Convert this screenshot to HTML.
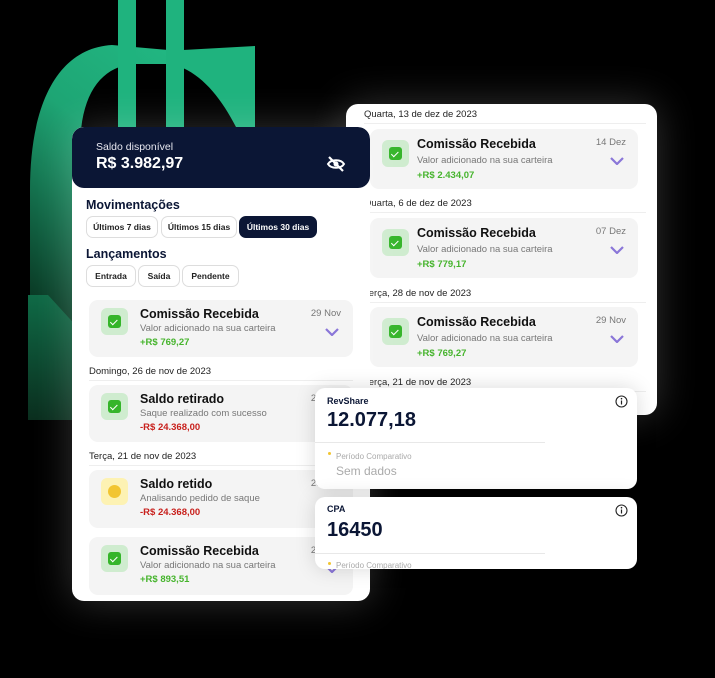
<!DOCTYPE html>
<html><head><meta charset="utf-8">
<style>
*{margin:0;padding:0;box-sizing:border-box}
body{width:715px;height:678px;background:#000;position:relative;overflow:hidden;font-family:"Liberation Sans",sans-serif}
.a{position:absolute}
.panel{background:#fff;border-radius:12px;box-shadow:0 0 40px rgba(255,255,255,0.2)}
.row{position:absolute;background:#f4f4f4;border-radius:9px}
.ic{position:absolute;left:12px;top:8px;width:27px;height:27px;border-radius:6px;background:#cfeccf}
.ic i{position:absolute;left:7px;top:7px;width:13px;height:13px;border-radius:3px;background:#35b52a}
.ic i:after{content:"";position:absolute;left:4px;top:2.5px;width:3px;height:5.5px;border:solid #fff;border-width:0 1.5px 1.5px 0;transform:rotate(45deg)}
.ic.y{background:#fdf2b3}.ic.y i{background:#f2c531;border-radius:50%}.ic.y i:after{display:none}
.t{position:absolute;left:51px;top:7px;font-size:12.5px;font-weight:bold;color:#111}
.s{position:absolute;left:51px;top:23px;font-size:9.5px;color:#777}
.m{position:absolute;left:51px;top:37px;font-size:9.5px;font-weight:bold;color:#46b42d}
.m.r{color:#c8201c}
.d{position:absolute;right:12px;top:8px;font-size:9.5px;color:#777}
.ch{position:absolute;right:14px;top:28px;width:14px;height:8px}
.date{position:absolute;font-size:9.5px;color:#222;border-bottom:1px solid #eee;padding-bottom:3px}
.btn{position:absolute;height:22px;border:1px solid #ddd;border-radius:7px;font-size:8.5px;font-weight:bold;color:#222;text-align:center;line-height:20px}
</style></head><body>

<svg class="a" style="left:0;top:0" width="380" height="420">
<defs><linearGradient id="g" x1="0.8" y1="0" x2="0.2" y2="1"><stop offset="0" stop-color="#22bb85"/><stop offset="0.45" stop-color="#1ea574"/><stop offset="1" stop-color="#0a3a25"/></linearGradient>
<linearGradient id="g2" x1="0" y1="0" x2="0" y2="1"><stop offset="0" stop-color="#0f6a46"/><stop offset="1" stop-color="#0a2e1e"/></linearGradient></defs>
<path d="M255 46 L225 55 L112 45 C60 48 30 100 30 190 L30 300 L80 330 L80 150 C80 95 100 68 132 64 L255 64 Z" fill="url(#g)"/>
<path d="M183 50 L255 46 L255 127 L236 127 C222 100 205 78 183 68 Z" fill="#1fb37e"/>
<rect x="118" y="0" width="18" height="130" fill="#1fb37e"/>
<rect x="166" y="0" width="18" height="130" fill="#1fb37e"/>
<path d="M28 295 L48 295 L80 330 L80 420 L28 420 Z" fill="url(#g2)"/>
</svg>

<!-- right panel -->
<div class="a panel" style="left:346px;top:104px;width:311px;height:311px;overflow:hidden">
 <div class="date" style="left:18px;top:5px;width:282px">Quarta, 13 de dez de 2023</div>
 <div class="row" style="left:24px;top:25px;width:268px;height:60px"><div class="ic" style="top:11px"><i></i></div><div class="t" style="left:47px;top:8px">Comissão Recebida</div><div class="s" style="left:47px;top:26px">Valor adicionado na sua carteira</div><div class="m" style="left:47px;top:41px">+R$ 2.434,07</div><div class="d">14 Dez</div><svg class="ch" viewBox="0 0 14 8"><path d="M1 1 L7 7 L13 1" stroke="#8a76d8" stroke-width="2.2" fill="none"/></svg></div>
 <div class="date" style="left:18px;top:94px;width:282px">Quarta, 6 de dez de 2023</div>
 <div class="row" style="left:24px;top:114px;width:268px;height:60px"><div class="ic" style="top:11px"><i></i></div><div class="t" style="left:47px;top:8px">Comissão Recebida</div><div class="s" style="left:47px;top:26px">Valor adicionado na sua carteira</div><div class="m" style="left:47px;top:41px">+R$ 779,17</div><div class="d">07 Dez</div><svg class="ch" viewBox="0 0 14 8"><path d="M1 1 L7 7 L13 1" stroke="#8a76d8" stroke-width="2.2" fill="none"/></svg></div>
 <div class="date" style="left:18px;top:184px;width:282px">Terça, 28 de nov de 2023</div>
 <div class="row" style="left:24px;top:203px;width:268px;height:60px"><div class="ic" style="top:11px"><i></i></div><div class="t" style="left:47px;top:8px">Comissão Recebida</div><div class="s" style="left:47px;top:26px">Valor adicionado na sua carteira</div><div class="m" style="left:47px;top:41px">+R$ 769,27</div><div class="d">29 Nov</div><svg class="ch" viewBox="0 0 14 8"><path d="M1 1 L7 7 L13 1" stroke="#8a76d8" stroke-width="2.2" fill="none"/></svg></div>
 <div class="date" style="left:18px;top:273px;width:282px">Terça, 21 de nov de 2023</div>
</div>

<!-- left panel -->
<div class="a panel" style="left:72px;top:127px;width:298px;height:474px;overflow:hidden">
 <div class="a" style="left:0;top:0;width:298px;height:61px;background:#0b1635;border-radius:12px">
  <div class="a" style="left:24px;top:14px;font-size:10.5px;color:#e8e8f0">Saldo disponível</div>
  <div class="a" style="left:24px;top:28px;font-size:16px;font-weight:bold;color:#fff">R$ 3.982,97</div>
  <svg class="a" style="left:254px;top:29px" width="20" height="16" viewBox="0 0 20 16"><path d="M2 8 C5 3 15 3 18 8 C15 13 5 13 2 8Z" stroke="#fff" stroke-width="2" fill="none"/><circle cx="10" cy="8" r="2.5" fill="#fff"/><path d="M3 1 L17 15" stroke="#fff" stroke-width="2.2"/></svg>
 </div>
 <div class="a" style="left:14px;top:71px;font-size:12.5px;font-weight:bold;color:#0b1635">Movimentações</div>
 <div class="btn" style="left:14px;top:89px;width:72px">Últimos 7 dias</div>
 <div class="btn" style="left:89px;top:89px;width:76px">Últimos 15 dias</div>
 <div class="btn" style="left:167px;top:89px;width:78px;background:#0b1635;color:#fff;border-color:#0b1635">Últimos 30 dias</div>
 <div class="a" style="left:14px;top:120px;font-size:12.5px;font-weight:bold;color:#0b1635">Lançamentos</div>
 <div class="btn" style="left:14px;top:138px;width:50px">Entrada</div>
 <div class="btn" style="left:66px;top:138px;width:42px">Saída</div>
 <div class="btn" style="left:110px;top:138px;width:57px">Pendente</div>

 <div class="row" style="left:17px;top:173px;width:264px;height:57px"><div class="ic"><i></i></div><div class="t">Comissão Recebida</div><div class="s">Valor adicionado na sua carteira</div><div class="m">+R$ 769,27</div><div class="d">29 Nov</div><svg class="ch" viewBox="0 0 14 8"><path d="M1 1 L7 7 L13 1" stroke="#8a76d8" stroke-width="2.2" fill="none"/></svg></div>
 <div class="date" style="left:17px;top:239px;width:264px">Domingo, 26 de nov de 2023</div>
 <div class="row" style="left:17px;top:258px;width:264px;height:57px"><div class="ic"><i></i></div><div class="t">Saldo retirado</div><div class="s">Saque realizado com sucesso</div><div class="m r">-R$ 24.368,00</div><div class="d">29 Nov</div></div>
 <div class="date" style="left:17px;top:324px;width:264px">Terça, 21 de nov de 2023</div>
 <div class="row" style="left:17px;top:343px;width:264px;height:58px"><div class="ic y"><i></i></div><div class="t">Saldo retido</div><div class="s">Analisando pedido de saque</div><div class="m r">-R$ 24.368,00</div><div class="d">29 Nov</div></div>
 <div class="row" style="left:17px;top:410px;width:264px;height:58px"><div class="ic"><i></i></div><div class="t">Comissão Recebida</div><div class="s">Valor adicionado na sua carteira</div><div class="m">+R$ 893,51</div><div class="d">29 Nov</div><svg class="ch" viewBox="0 0 14 8"><path d="M1 1 L7 7 L13 1" stroke="#8a76d8" stroke-width="2.2" fill="none"/></svg></div>
</div>

<!-- RevShare -->
<div class="a" style="left:315px;top:388px;width:322px;height:101px;background:#fff;border-radius:10px;box-shadow:0 0 20px rgba(0,0,0,0.15);overflow:hidden">
 <div class="a" style="left:12px;top:8px;font-size:9px;font-weight:bold;color:#0b1635">RevShare</div>
 <svg class="a" style="left:300px;top:7px" width="13" height="13" viewBox="0 0 13 13"><circle cx="6.5" cy="6.5" r="5.5" stroke="#222" stroke-width="1.1" fill="none"/><path d="M6.5 5.5 V9.5" stroke="#222" stroke-width="1.2"/><circle cx="6.5" cy="3.7" r="0.8" fill="#222"/></svg>
 <div class="a" style="left:12px;top:21px;font-size:20px;font-weight:bold;color:#0b1635">12.077,18</div>
 <div class="a" style="left:0;top:54px;width:230px;border-top:1px solid #e8e8e8"></div>
 <div class="a" style="left:13px;top:64px;width:3px;height:3px;border-radius:50%;background:#f2c531"></div>
 <div class="a" style="left:21px;top:64px;font-size:8px;color:#aaa">Período Comparativo</div>
 <div class="a" style="left:21px;top:76px;font-size:12px;color:#aaa">Sem dados</div>
</div>

<!-- CPA -->
<div class="a" style="left:315px;top:497px;width:322px;height:72px;background:#fff;border-radius:10px;box-shadow:0 0 20px rgba(0,0,0,0.15);overflow:hidden">
 <div class="a" style="left:12px;top:7px;font-size:9px;font-weight:bold;color:#0b1635">CPA</div>
 <svg class="a" style="left:300px;top:7px" width="13" height="13" viewBox="0 0 13 13"><circle cx="6.5" cy="6.5" r="5.5" stroke="#222" stroke-width="1.1" fill="none"/><path d="M6.5 5.5 V9.5" stroke="#222" stroke-width="1.2"/><circle cx="6.5" cy="3.7" r="0.8" fill="#222"/></svg>
 <div class="a" style="left:12px;top:22px;font-size:20px;font-weight:bold;color:#0b1635">16450</div>
 <div class="a" style="left:0;top:56px;width:230px;border-top:1px solid #e8e8e8"></div>
 <div class="a" style="left:13px;top:65px;width:3px;height:3px;border-radius:50%;background:#f2c531"></div>
 <div class="a" style="left:21px;top:64px;font-size:8px;color:#aaa">Período Comparativo</div>
</div>
</body></html>
